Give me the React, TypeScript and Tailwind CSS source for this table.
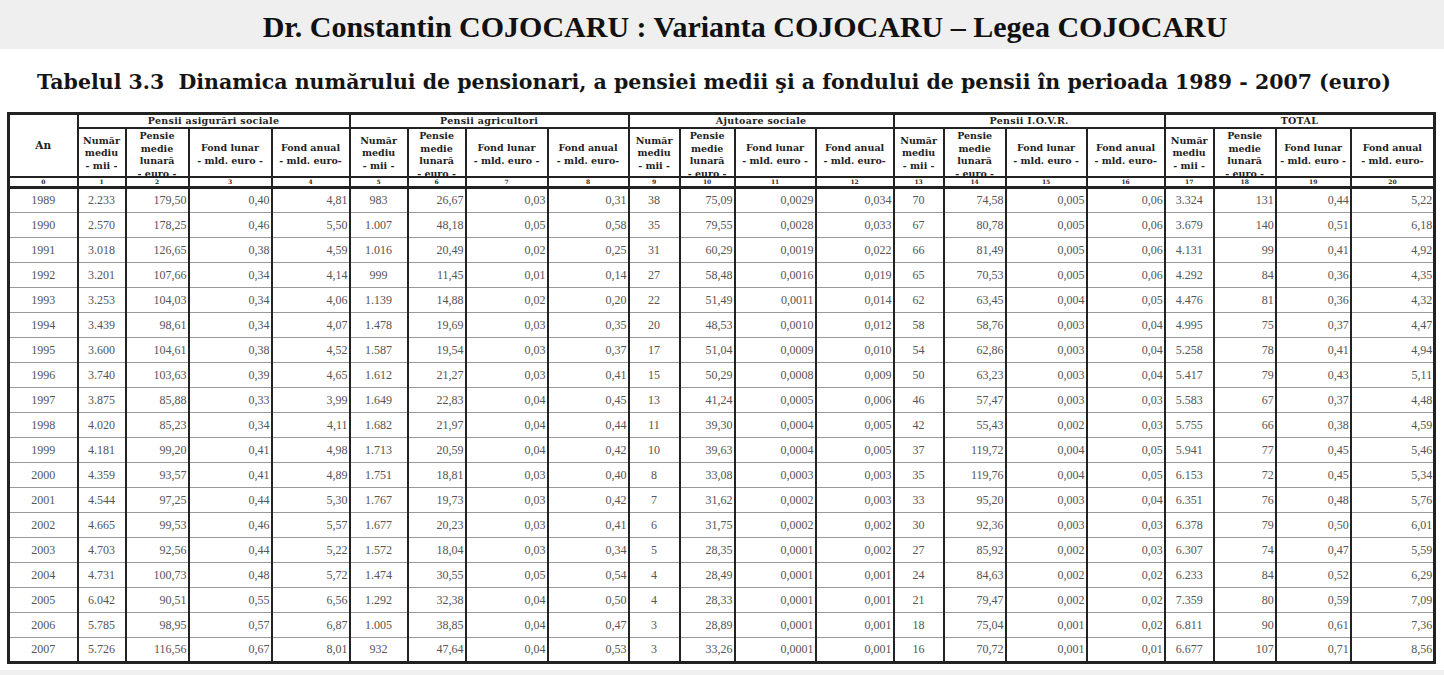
import React from "react";

type Group = { title: string };

const GROUPS: Group[] = [
  { title: "Pensii asigurări sociale" },
  { title: "Pensii agricultori" },
  { title: "Ajutoare sociale" },
  { title: "Pensii I.O.V.R." },
  { title: "TOTAL" },
];

const WIDTHS = [69, 48, 63, 83, 78, 58, 58, 82, 81, 51, 55, 81, 78, 50, 62, 81, 78, 49, 62, 75, 84];

const ROWS: string[][] = [
  ["1989", "2.233", "179,50", "0,40", "4,81", "983", "26,67", "0,03", "0,31", "38", "75,09", "0,0029", "0,034", "70", "74,58", "0,005", "0,06", "3.324", "131", "0,44", "5,22"],
  ["1990", "2.570", "178,25", "0,46", "5,50", "1.007", "48,18", "0,05", "0,58", "35", "79,55", "0,0028", "0,033", "67", "80,78", "0,005", "0,06", "3.679", "140", "0,51", "6,18"],
  ["1991", "3.018", "126,65", "0,38", "4,59", "1.016", "20,49", "0,02", "0,25", "31", "60,29", "0,0019", "0,022", "66", "81,49", "0,005", "0,06", "4.131", "99", "0,41", "4,92"],
  ["1992", "3.201", "107,66", "0,34", "4,14", "999", "11,45", "0,01", "0,14", "27", "58,48", "0,0016", "0,019", "65", "70,53", "0,005", "0,06", "4.292", "84", "0,36", "4,35"],
  ["1993", "3.253", "104,03", "0,34", "4,06", "1.139", "14,88", "0,02", "0,20", "22", "51,49", "0,0011", "0,014", "62", "63,45", "0,004", "0,05", "4.476", "81", "0,36", "4,32"],
  ["1994", "3.439", "98,61", "0,34", "4,07", "1.478", "19,69", "0,03", "0,35", "20", "48,53", "0,0010", "0,012", "58", "58,76", "0,003", "0,04", "4.995", "75", "0,37", "4,47"],
  ["1995", "3.600", "104,61", "0,38", "4,52", "1.587", "19,54", "0,03", "0,37", "17", "51,04", "0,0009", "0,010", "54", "62,86", "0,003", "0,04", "5.258", "78", "0,41", "4,94"],
  ["1996", "3.740", "103,63", "0,39", "4,65", "1.612", "21,27", "0,03", "0,41", "15", "50,29", "0,0008", "0,009", "50", "63,23", "0,003", "0,04", "5.417", "79", "0,43", "5,11"],
  ["1997", "3.875", "85,88", "0,33", "3,99", "1.649", "22,83", "0,04", "0,45", "13", "41,24", "0,0005", "0,006", "46", "57,47", "0,003", "0,03", "5.583", "67", "0,37", "4,48"],
  ["1998", "4.020", "85,23", "0,34", "4,11", "1.682", "21,97", "0,04", "0,44", "11", "39,30", "0,0004", "0,005", "42", "55,43", "0,002", "0,03", "5.755", "66", "0,38", "4,59"],
  ["1999", "4.181", "99,20", "0,41", "4,98", "1.713", "20,59", "0,04", "0,42", "10", "39,63", "0,0004", "0,005", "37", "119,72", "0,004", "0,05", "5.941", "77", "0,45", "5,46"],
  ["2000", "4.359", "93,57", "0,41", "4,89", "1.751", "18,81", "0,03", "0,40", "8", "33,08", "0,0003", "0,003", "35", "119,76", "0,004", "0,05", "6.153", "72", "0,45", "5,34"],
  ["2001", "4.544", "97,25", "0,44", "5,30", "1.767", "19,73", "0,03", "0,42", "7", "31,62", "0,0002", "0,003", "33", "95,20", "0,003", "0,04", "6.351", "76", "0,48", "5,76"],
  ["2002", "4.665", "99,53", "0,46", "5,57", "1.677", "20,23", "0,03", "0,41", "6", "31,75", "0,0002", "0,002", "30", "92,36", "0,003", "0,03", "6.378", "79", "0,50", "6,01"],
  ["2003", "4.703", "92,56", "0,44", "5,22", "1.572", "18,04", "0,03", "0,34", "5", "28,35", "0,0001", "0,002", "27", "85,92", "0,002", "0,03", "6.307", "74", "0,47", "5,59"],
  ["2004", "4.731", "100,73", "0,48", "5,72", "1.474", "30,55", "0,05", "0,54", "4", "28,49", "0,0001", "0,001", "24", "84,63", "0,002", "0,02", "6.233", "84", "0,52", "6,29"],
  ["2005", "6.042", "90,51", "0,55", "6,56", "1.292", "32,38", "0,04", "0,50", "4", "28,33", "0,0001", "0,001", "21", "79,47", "0,002", "0,02", "7.359", "80", "0,59", "7,09"],
  ["2006", "5.785", "98,95", "0,57", "6,87", "1.005", "38,85", "0,04", "0,47", "3", "28,89", "0,0001", "0,001", "18", "75,04", "0,001", "0,02", "6.811", "90", "0,61", "7,36"],
  ["2007", "5.726", "116,56", "0,67", "8,01", "932", "47,64", "0,04", "0,53", "3", "33,26", "0,0001", "0,001", "16", "70,72", "0,001", "0,01", "6.677", "107", "0,71", "8,56"],
];

const serifBold = "font-['DejaVu_Serif',serif] font-bold";

// the "- euro -" line is half hidden under the border in the source scan
function SubHeaders() {
  return (
    <>
      <th className="border-2 border-[#222] px-0 pt-[2px] align-middle text-[9.5px] leading-[12.5px]">
        Număr
        <br />
        mediu
        <br />- mii -
      </th>
      <th className="border-2 border-[#222] p-0 align-top text-[9.5px] leading-[12.5px]">
        <div className="h-[47px] overflow-hidden pt-[1px]">
          Pensie
          <br />
          medie
          <br />
          lunară
          <br />- euro -
        </div>
      </th>
      <th className="border-2 border-[#222] px-0 pt-[2px] align-middle text-[9.5px] leading-[13px]">
        Fond lunar
        <br />- mld. euro -
      </th>
      <th className="border-2 border-[#222] px-0 pt-[2px] align-middle text-[9.5px] leading-[13px]">
        Fond anual
        <br />- mld. euro-
      </th>
    </>
  );
}

export default function App() {
  return (
    <div className="flex h-[675px] w-[1444px] flex-col bg-[#f0f0f0]">
      <div className="flex h-[49px] items-center justify-center bg-[#efefef] pl-[46px] pt-[4px]">
        <h1 className="font-['Liberation_Serif',serif] text-[30px] font-bold text-[#111]">
          Dr. Constantin COJOCARU : Varianta COJOCARU – Legea COJOCARU
        </h1>
      </div>
      <div className="h-[621px] bg-white pl-[7px]">
        <h2 className={`${serifBold} pl-[30px] pt-[19px] text-[20.5px] leading-[28px] text-[#151515]`}>
          Tabelul 3.3 &nbsp;Dinamica numărului de pensionari, a pensiei medii şi a fondului de pensii în perioada 1989 - 2007 (euro)
        </h2>
        <table className="mt-[16px] w-[1426px] table-fixed border-collapse border-[3px] border-[#222]">
          <colgroup>
            {WIDTHS.map((w, i) => (
              <col key={i} style={{ width: w }} />
            ))}
          </colgroup>
          <thead className={`${serifBold} text-[#222]`}>
            <tr className="h-[14px]">
              <th rowSpan={2} className="border-2 border-[#222] align-middle text-[10.5px]">
                An
              </th>
              {GROUPS.map((g) => (
                <th
                  key={g.title}
                  colSpan={4}
                  className="border-x-2 border-b border-[#222] p-0 text-[9.5px] leading-[12px] tracking-[0.3px]"
                >
                  {g.title}
                </th>
              ))}
            </tr>
            <tr className="h-[49px]">
              {GROUPS.map((g) => (
                <SubHeaders key={g.title} />
              ))}
            </tr>
            <tr className="h-[10px]">
              {WIDTHS.map((_, i) => (
                <th key={i} className="border-x-2 border-t-2 border-b-[3px] border-[#222] p-0 text-[6px] leading-[7px]">
                  {i}
                </th>
              ))}
            </tr>
          </thead>
          <tbody className="font-['Liberation_Serif',serif] text-[12px] text-[#555]">
            {ROWS.map((row) => (
              <tr key={row[0]} className="h-[25px]">
                {row.map((cell, i) => {
                  const center = i === 0 || i % 4 === 1;
                  return (
                    <td
                      key={i}
                      className={`border-x-2 border-x-[#222] border-y border-y-[#9a9a9a] p-0 ${
                        center ? "text-center" : "pr-[1px] text-right"
                      }`}
                    >
                      {cell}
                    </td>
                  );
                })}
              </tr>
            ))}
          </tbody>
        </table>
      </div>
    </div>
  );
}
